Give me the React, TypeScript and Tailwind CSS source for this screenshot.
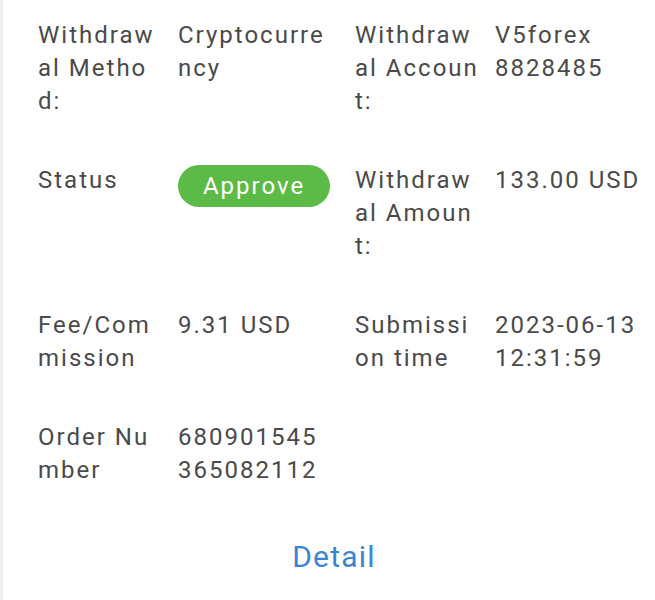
const rows = [
  [
    { label: 'Withdrawal Method:', value: 'Cryptocurrency' },
    { label: 'Withdrawal Account:', value: 'V5forex 8828485' },
  ],
  [
    { label: 'Status', value: 'Approve', pill: true },
    { label: 'Withdrawal Amount:', value: '133.00 USD' },
  ],
  [
    { label: 'Fee/Commission', value: '9.31 USD' },
    { label: 'Submission time', value: '2023-06-13 12:31:59' },
  ],
  [{ label: 'Order Number', value: '680901545365082112' }],
]

type Cell = { label: string; value: string; pill?: boolean }

const Item = ({ cell, first }: { cell: Cell; first: boolean }) => (
  <div className={`flex ${first ? 'w-[317px] shrink-0' : 'flex-1'}`}>
    <div className="w-[126px] shrink-0 break-all">{cell.label}</div>
    {cell.pill ? (
      <div className="ml-[14px] mt-[1px] flex h-[42px] w-[152px] items-center justify-center rounded-full bg-[#5cba46] text-white">
        {cell.value}
      </div>
    ) : (
      <div className="ml-[14px] w-[152px] break-words">{cell.value}</div>
    )}
  </div>
)

export default function App() {
  return (
    <div className="h-[600px] overflow-hidden bg-[#efefef] pl-[3px]">
      <div
        className="h-full bg-white pt-[19px] text-[24px] leading-[33px] tracking-[2px] text-[#4a4a4a]"
        style={{ fontFamily: 'Roboto, "Noto Sans", sans-serif' }}
      >
        <div className="flex flex-col gap-[46px] pl-[35px]">
          {rows.map((row, i) => (
            <div key={i} className="flex">
              {row.map((cell, j) => (
                <Item key={j} cell={cell} first={j === 0} />
              ))}
            </div>
          ))}
        </div>
        <div className="mt-[50px] pl-[10px] text-center text-[30px] leading-[40px] tracking-[1.2px] text-[#3b84d4]">
          Detail
        </div>
      </div>
    </div>
  )
}
